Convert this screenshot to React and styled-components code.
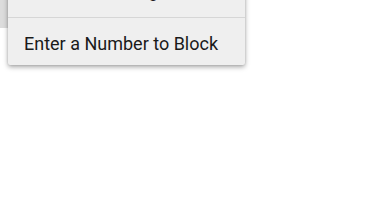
import React from 'react'
import styled, { createGlobalStyle } from 'styled-components'

const Global = createGlobalStyle`
  html, body {
    margin: 0;
    padding: 0;
    background: #ffffff;
    font-family: Roboto, "Noto Sans", sans-serif;
  }
`

const Screen = styled.div`
  position: relative;
  width: 384px;
  height: 216px;
  overflow: hidden;
  background: #ffffff;
`

const PressedRow = styled.div`
  width: 200px;
  height: 28px;
  background: #dcdcdc;
`

const Menu = styled.ul`
  position: absolute;
  left: 8px;
  top: -34px;
  width: 237px;
  margin: 0;
  padding: 0;
  list-style: none;
  background: #efefef;
  border-radius: 2px;
  box-shadow: 0 2px 5px rgba(0, 0, 0, 0.35), 0 0 2px rgba(0, 0, 0, 0.15);
`

const Item = styled.li`
  display: flex;
  align-items: center;
  height: ${({ divided }) => (divided ? '48px' : '51px')};
  padding: ${({ divided }) => (divided ? '3px 16px 0' : '0 16px 3px')};
  font-size: 18px;
  letter-spacing: ${({ tight }) => (tight ? '-0.5px' : '0')};
  color: #1a1a1a;
  border-top: ${({ divided }) => (divided ? '1px solid #d6d6d6' : 'none')};
  box-sizing: border-box;
  white-space: nowrap;
`

export default function App() {
  return (
    <>
      <Global />
      <Screen>
        <PressedRow />
        <Menu>
          <Item tight>Add from Existing Contacts</Item>
          <Item divided>Enter a Number to Block</Item>
        </Menu>
      </Screen>
    </>
  )
}
